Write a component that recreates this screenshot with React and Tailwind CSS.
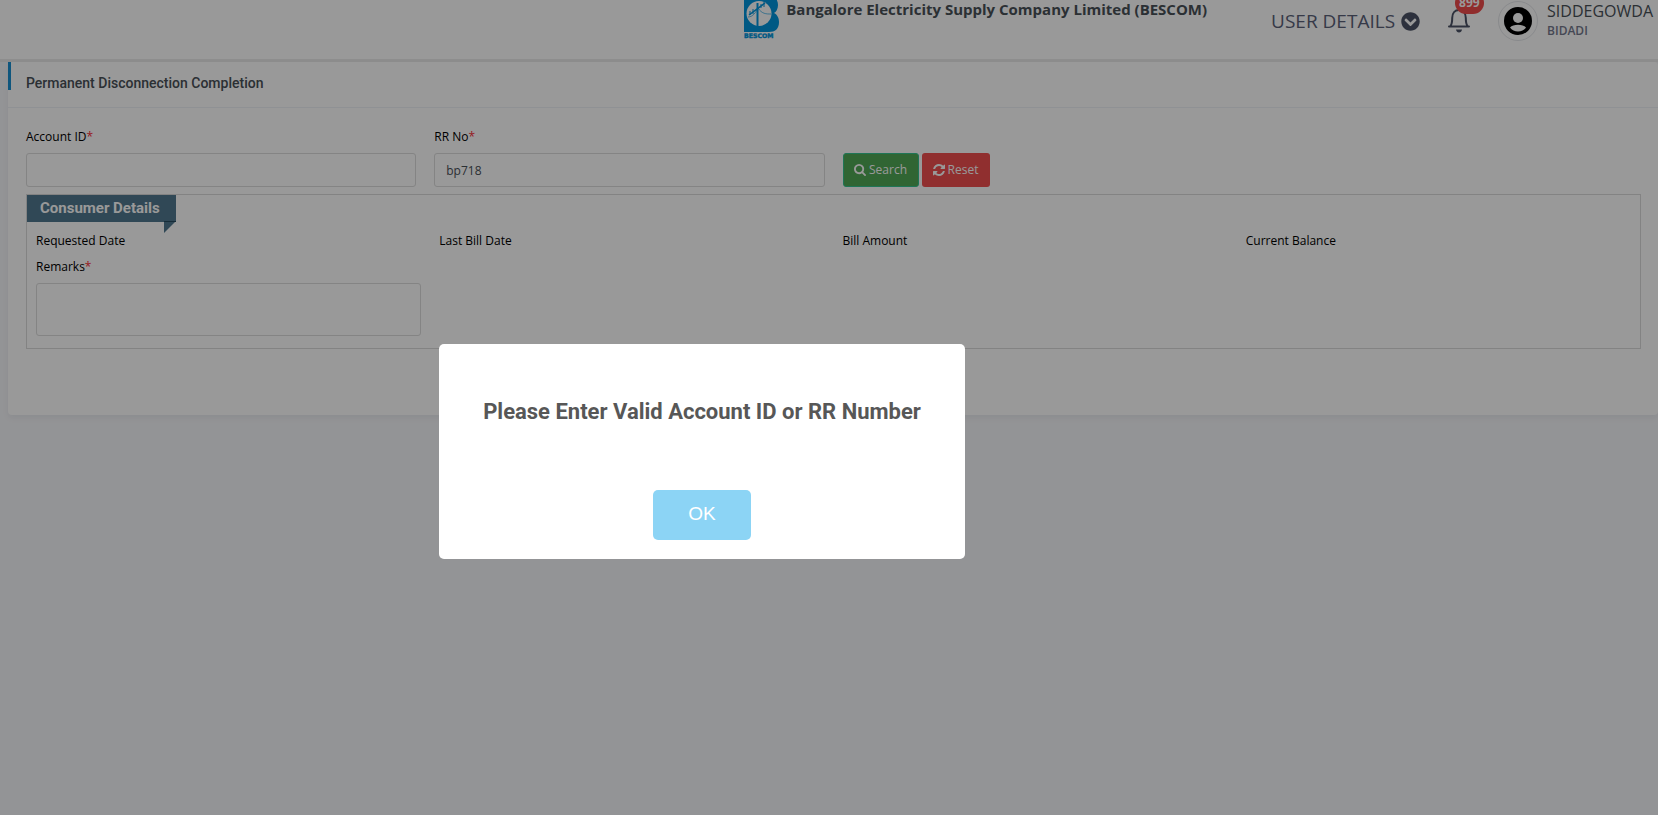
import React from "react";
import { FaChevronCircleDown } from "react-icons/fa";

function SearchIcon() {
  return (
    <svg viewBox="0 0 1664 1664" className="size-3" fill="currentColor" aria-hidden="true">
      <path d="M1152 704q0-185-131.5-316.5t-316.5-131.5-316.5 131.5-131.5 316.5 131.5 316.5 316.5 131.5 316.5-131.5 131.5-316.5zm512 832q0 52-38 90t-90 38q-54 0-90-38l-343-342q-179 124-399 124-143 0-273.5-55.5t-225-150-150-225-55.5-273.5 55.5-273.5 150-225 225-150 273.5-55.5 273.5 55.5 225 150 150 225 55.5 273.5q0 220-124 399l343 343q37 37 37 90z" />
    </svg>
  );
}

function RefreshIcon() {
  return (
    <svg viewBox="0 0 1536 1536" className="size-3" fill="currentColor" aria-hidden="true">
      <path d="M1511 928q0 5-1 7-64 268-268 434.5t-478 166.5q-146 0-282.5-55t-243.5-157l-129 129q-19 19-45 19t-45-19-19-45v-448q0-26 19-45t45-19h448q26 0 45 19t19 45-19 45l-137 137q71 66 161 102t187 36q134 0 250-65t186-179q11-17 53-117 8-23 30-23h192q13 0 22.5 9.5t9.5 22.5zm25-800v448q0 26-19 45t-45 19h-448q-26 0-45-19t-19-45 19-45l138-138q-148-137-349-137-134 0-250 65t-186 179q-11 17-53 117-8 23-30 23h-199q-13 0-22.5-9.5t-9.5-22.5v-7q65-268 270-434.5t480-166.5q146 0 284 55.5t245 156.5l130-129q19-19 45-19t45 19 19 45z" />
    </svg>
  );
}

function BellIcon() {
  return (
    <svg viewBox="0 0 24 26" className="h-[26px] w-6" aria-hidden="true">
      <path d="M2 18.500H22M3.500 18C5 16 5.200 14 5.200 10C5.200 5 8 2 12 2S18.800 5 18.800 10C18.800 14 19 16 20.500 18" fill="none" stroke="currentColor" strokeWidth="2" strokeLinecap="round" />
      <path d="M9 21.500H15Q14.500 24.500 12 24.500T9 21.500Z" fill="currentColor" />
    </svg>
  );
}

function Logo() {
  return (
    <svg viewBox="0 0 36 44" className="h-11 w-9 shrink-0" role="img" aria-label="BESCOM">
      <path d="M0 0H23C31 0 34 5 34 10C34 14 32 17 30 18C34 20 35 24 35 27C35 34 31 37 25 37H0Z" fill="#0094dc" />
      <circle cx="15" cy="18.500" r="12.500" fill="#fff" />
      <g stroke="#0094dc" fill="none">
        <path d="M13.500 8V31" strokeWidth="2" />
        <path d="M5 20L21 8" strokeWidth="1.500" />
        <path d="M6 16V20M9 14V19M17 9V13M20 7V12" strokeWidth="1" />
        <path d="M4 22C9 22 12 17 14 13C18 19 22 19 27 19" strokeWidth="0.600" />
      </g>
      <text x="0" y="43" fontSize="6.200" fontWeight="900" fontFamily="DejaVu Sans" stroke="#0094dc" strokeWidth="0.400" fill="#0094dc">BESCOM</text>
    </svg>
  );
}

function Avatar() {
  return (
    <span className="flex size-10 shrink-0 items-center justify-center rounded-full border border-[#e4e6ea]">
      <svg viewBox="0 0 28 28" className="size-7" aria-hidden="true">
        <circle cx="14" cy="14" r="14" fill="#000" />
        <circle cx="14" cy="11" r="5" fill="#fff" />
        <path d="M6 20.500C9 16.800 19 16.800 22 20.500C18.500 25.800 9.500 25.800 6 20.500Z" fill="#fff" />
      </svg>
    </span>
  );
}

function Label({ htmlFor, children, required }) {
  return (
    <label htmlFor={htmlFor} className="block text-[12px] leading-5 font-medium text-black">
      {children}
      {required && <span className="text-red-500">*</span>}
    </label>
  );
}

const control =
  "mt-[6px] block w-full rounded-[3px] border border-[#dcdcdc] bg-white px-[11px] text-[12px] text-[#495057] outline-none";

export default function App() {
  return (
    <div className="min-h-screen overflow-hidden bg-[#f6f7fa] font-['Open_Sans','Noto_Sans',sans-serif]">
      <header className="flex h-[62px] items-start justify-end overflow-hidden border-b-3 border-[#ebebeb] bg-white pr-[5px] text-[#4c5366]">
        <div className="-mt-[5px] mr-[64px] flex gap-[6px]">
          <Logo />
          <h1 className="pt-[2px] text-[15px] leading-6 font-bold text-[#495057]">
            Bangalore Electricity Supply Company Limited (BESCOM)
          </h1>
        </div>
        <div className="flex h-[42px] items-center">
          <button type="button" className="flex items-center gap-[6px] text-[19px] text-[#5b6178]">
            USER DETAILS
            <FaChevronCircleDown className="size-[19px] text-[#4c5366]" />
          </button>
          <button type="button" aria-label="Notifications" className="relative ml-[27px]">
            <BellIcon />
            <span className="absolute -top-4 left-2 rounded-full bg-[#f04b4b] px-1 text-[12px] leading-[22px] font-bold text-white">
              899
            </span>
          </button>
          <div className="ml-[27px] flex items-center gap-[9px]">
            <Avatar />
            <div className="whitespace-nowrap">
              <p className="text-[16px] leading-5 font-medium text-[#495057]">SIDDEGOWDA</p>
              <p className="text-[12px] leading-5 font-semibold text-[#74788d]">BIDADI</p>
            </div>
          </div>
        </div>
      </header>

      <main className="ml-2 rounded-[4px] bg-white pb-[66px] shadow-[0_3px_6px_rgba(18,38,63,0.06)]">
        <div className="flex h-[46px] border-b border-[#eff2f7]">
          <span className="h-7 w-[3px] bg-[#1a8fd0]" />
          <h2 className="pt-[11px] pl-[15px] font-[Roboto,sans-serif] text-[14px] leading-5 font-medium text-[#495057]">
            Permanent Disconnection Completion
          </h2>
        </div>

        <form className="pt-[19px] pr-[17px] pl-[18px]" onSubmit={(e) => e.preventDefault()}>
          <div className="grid grid-cols-4 items-end gap-[18px]">
            <div>
              <Label htmlFor="account" required>Account ID</Label>
              <input id="account" type="text" className={`${control} h-[34px]`} />
            </div>
            <div>
              <Label htmlFor="rr" required>RR No</Label>
              <input id="rr" type="text" defaultValue="bp718" className={`${control} h-[34px]`} />
            </div>
            <div className="flex gap-[3px] text-[12px] text-white">
              <button type="button" className="flex h-[34px] w-[76px] items-center justify-center gap-[3px] rounded-[3px] border border-[#34c38f] bg-[#50a855]">
                <SearchIcon />
                Search
              </button>
              <button type="button" className="flex h-[34px] w-[68px] items-center justify-center gap-[3px] rounded-[3px] bg-[#f04f4f]">
                <RefreshIcon />
                Reset
              </button>
            </div>
          </div>

          <section className="mt-[7px] border border-[#dadada] pb-[12px]">
            <div className="relative h-[27px] w-[149px] bg-[#50788f] pl-[13px]">
              <h3 className="font-[Roboto,sans-serif] text-[15px] leading-[26px] font-bold text-white">
                Consumer Details
              </h3>
              <svg viewBox="0 0 12 12" className="absolute top-[26px] right-0 size-3" aria-hidden="true">
                <path d="M0 0H12L0 12Z" fill="#50788f" />
                <path d="M0 .5H12" stroke="#254a5e" />
              </svg>
            </div>
            <div className="mt-[9px] grid grid-cols-4">
              {["Requested Date", "Last Bill Date", "Bill Amount", "Current Balance"].map((t) => (
                <p key={t} className="px-[9px] text-[12px] leading-5 font-medium text-black">{t}</p>
              ))}
            </div>
            <div className="mt-[6px] grid grid-cols-4">
              <div className="px-[9px]">
                <Label htmlFor="remarks" required>Remarks</Label>
                <textarea id="remarks" className={`${control} h-[53px] resize-none`} />
              </div>
            </div>
          </section>
        </form>
      </main>

      <div className="fixed inset-0 bg-black/40" />
      <div
        role="alertdialog"
        aria-labelledby="message"
        className="fixed top-1/2 left-1/2 -mt-[64px] -ml-[390px] w-[526px] rounded-[5px] bg-white px-4 pt-[50px] pb-[19px] text-center"
      >
        <h2 id="message" className="font-[Roboto,sans-serif] text-[22px] leading-9 font-bold text-[#575757]">
          Please Enter Valid Account ID or RR Number
        </h2>
        <button type="button" className="mt-[60px] h-[50px] w-[98px] rounded-[5px] bg-[#8cd4f5] font-['Liberation_Sans',sans-serif] text-[19px] text-white">
          OK
        </button>
      </div>
    </div>
  );
}
